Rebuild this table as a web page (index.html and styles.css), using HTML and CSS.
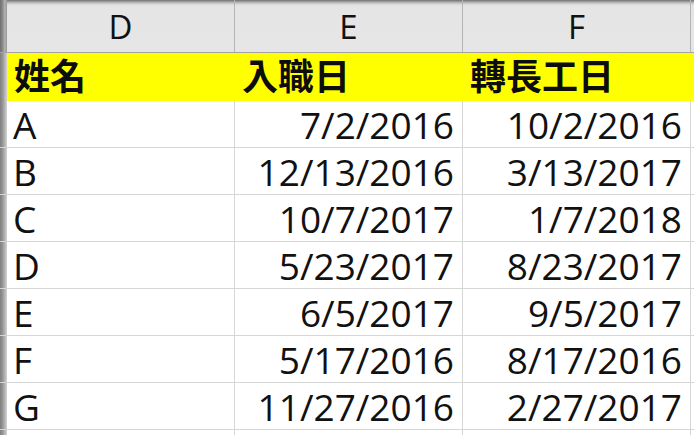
FILE: index.html
```html
<!DOCTYPE html>
<html lang="zh-Hant">
<head>
<meta charset="utf-8">
<title>Sheet</title>
<link rel="stylesheet" href="styles.css">
</head>
<body>
<div class="sheet">
  <div class="row head">
    <div class="stub"></div>
    <div class="cell">D</div>
    <div class="cell">E</div>
    <div class="cell">F</div>
    <div class="cell rest"></div>
  </div>
  <div class="row title">
    <div class="stub"></div>
    <div class="cell">姓名</div>
    <div class="cell">入職日</div>
    <div class="cell">轉長工日</div>
    <div class="cell rest"></div>
  </div>
  <div class="row data">
    <div class="stub"></div>
    <div class="cell">A</div>
    <div class="cell num">7/2/2016</div>
    <div class="cell num">10/2/2016</div>
    <div class="cell rest"></div>
  </div>
  <div class="row data">
    <div class="stub"></div>
    <div class="cell">B</div>
    <div class="cell num">12/13/2016</div>
    <div class="cell num">3/13/2017</div>
    <div class="cell rest"></div>
  </div>
  <div class="row data">
    <div class="stub"></div>
    <div class="cell">C</div>
    <div class="cell num">10/7/2017</div>
    <div class="cell num">1/7/2018</div>
    <div class="cell rest"></div>
  </div>
  <div class="row data">
    <div class="stub"></div>
    <div class="cell">D</div>
    <div class="cell num">5/23/2017</div>
    <div class="cell num">8/23/2017</div>
    <div class="cell rest"></div>
  </div>
  <div class="row data">
    <div class="stub"></div>
    <div class="cell">E</div>
    <div class="cell num">6/5/2017</div>
    <div class="cell num">9/5/2017</div>
    <div class="cell rest"></div>
  </div>
  <div class="row data">
    <div class="stub"></div>
    <div class="cell">F</div>
    <div class="cell num">5/17/2016</div>
    <div class="cell num">8/17/2016</div>
    <div class="cell rest"></div>
  </div>
  <div class="row data">
    <div class="stub"></div>
    <div class="cell">G</div>
    <div class="cell num">11/27/2016</div>
    <div class="cell num">2/27/2017</div>
    <div class="cell rest"></div>
  </div>
  <div class="row data">
    <div class="stub"></div>
    <div class="cell"></div>
    <div class="cell num"></div>
    <div class="cell num"></div>
    <div class="cell rest"></div>
  </div>
</div>
</body>
</html>
```
FILE: styles.css
```css
* {
  box-sizing: border-box;
}

html, body {
  margin: 0;
  padding: 0;
  background: #ffffff;
  overflow: hidden;
}

.sheet {
  width: 694px;
  height: 435px;
  overflow: hidden;
  font-family: "Open Sans", "Noto Sans CJK TC", sans-serif;
  color: #111111;
}

.row {
  display: flex;
  white-space: nowrap;
}

.stub {
  flex: 0 0 7px;
  background: linear-gradient(to right, #7e7e7e 0, #9a9a9a 3px, #c6c6c6 6px, #d0d0d0 7px);
}

.cell {
  flex: 0 0 228px;
  border-right: 1px solid #d6d6d6;
}

.cell.rest {
  flex: 1 1 auto;
  border-right: none;
}

/* column header row */
.head {
  height: 53px;
  background: linear-gradient(to bottom, #6f6f6f 0, #a8a8a8 2px, #d6d6d6 4px, #e5e5e5 6px, #e6e6e6 100%);
  border-bottom: 1px solid #a3a3a3;
}

.head .stub {
  background: linear-gradient(to right, #6e6e6e 0, #8f8f8f 3px, #b8b8b8 5px, #9c9c9c 6px);
}

.head .cell {
  border-right-color: #b4b4b4;
  text-align: center;
  font-size: 33px;
  line-height: 50px;
  padding-top: 2px;
}

/* yellow title row */
.title {
  height: 48px;
  background: #ffff00;
}

.title .cell {
  border-right-color: #ffff00;
  font-family: "Noto Sans CJK TC", sans-serif;
  font-weight: 700;
  font-size: 36px;
  line-height: 42px;
  padding-left: 7px;
  color: #0d0d0d;
}

/* data rows */
.data {
  height: 47px;
  border-bottom: 1px solid #d6d6d6;
}

.data .cell {
  font-size: 37px;
  line-height: 47px;
  padding-left: 6px;
}

.data .cell.num {
  text-align: right;
  padding-left: 0;
  padding-right: 8px;
}
```
